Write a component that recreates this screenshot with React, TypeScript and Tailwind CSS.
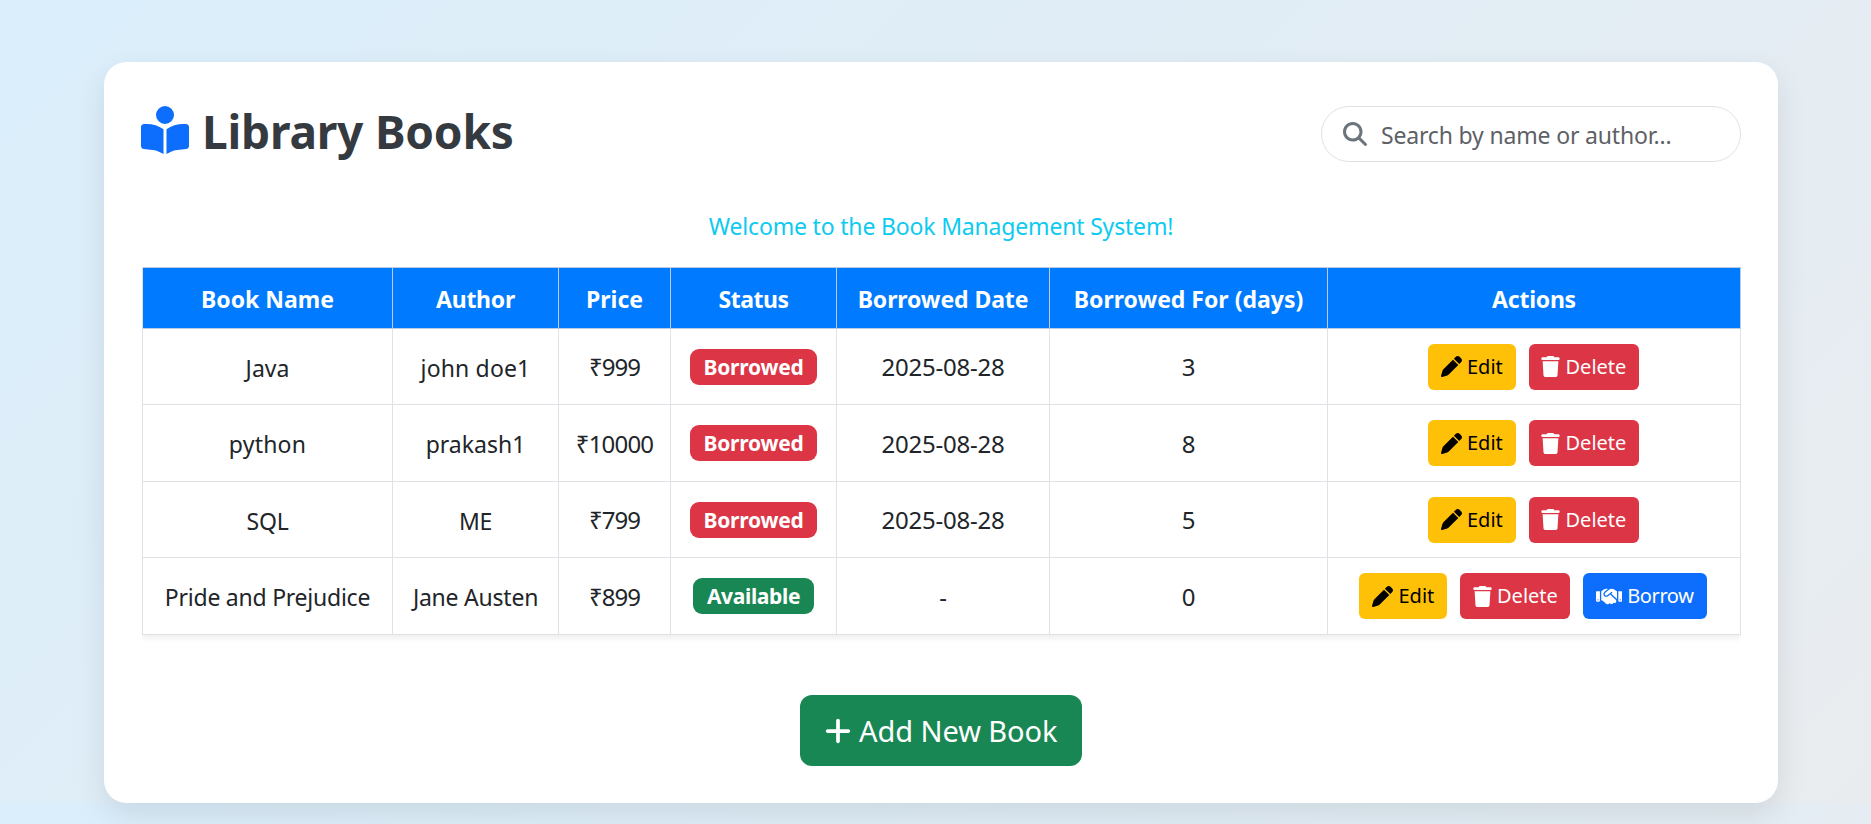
import type { ReactNode } from "react";
import {
  FaBookOpenReader,
  FaHandshake,
  FaMagnifyingGlass,
  FaPen,
  FaPlus,
  FaTrash,
} from "react-icons/fa6";

type Book = {
  name: string;
  nameClass: string;
  author: string;
  authorClass: string;
  price: string;
  priceClass: string;
  available: boolean;
  date: string;
  days: number;
  rowClass: string;
};

const columns = [
  { label: "Book Name", className: "w-[250px]" },
  { label: "Author", className: "w-[166px] tracking-[-0.28px]" },
  { label: "Price", className: "w-[112px]" },
  { label: "Status", className: "w-[166px] tracking-[-0.5px]" },
  { label: "Borrowed Date", className: "w-[213px] tracking-[-0.1px]" },
  { label: "Borrowed For (days)", className: "w-[278px]" },
  { label: "Actions", className: "w-[413px] tracking-[-0.25px]" },
];

const books: Book[] = [
  { name: "Java", nameClass: "", author: "john doe1", authorClass: "tracking-[0.15px]", price: "₹999", priceClass: "tracking-[-0.97px]", available: false, date: "2025-08-28", days: 3, rowClass: "h-[76px]" },
  { name: "python", nameClass: "tracking-[0.2px]", author: "prakash1", authorClass: "", price: "₹10000", priceClass: "tracking-[-0.84px]", available: false, date: "2025-08-28", days: 8, rowClass: "h-[77px]" },
  { name: "SQL", nameClass: "tracking-[-0.2px]", author: "ME", authorClass: "tracking-[-0.2px]", price: "₹799", priceClass: "tracking-[-0.97px]", available: false, date: "2025-08-28", days: 5, rowClass: "h-[76px]" },
  { name: "Pride and Prejudice", nameClass: "tracking-[-0.24px]", author: "Jane Austen", authorClass: "tracking-[-0.23px]", price: "₹899", priceClass: "tracking-[-0.97px]", available: true, date: "-", days: 0, rowClass: "h-[77px]" },
];

function Cell({ className = "", children }: { className?: string; children: ReactNode }) {
  return (
    <td className={`border-r border-b border-[#dee2e6] p-0 text-center align-middle ${className}`}>
      {children}
    </td>
  );
}

function StatusBadge({ available }: { available: boolean }) {
  return (
    <span
      className={`mx-auto flex h-9 items-center justify-center rounded-[9px] text-[21px] font-bold text-white ${
        available ? "w-[121px] bg-[#198754] tracking-[-0.34px]" : "w-[127px] bg-[#dc3545] tracking-[-0.24px]"
      }`}
    >
      {available ? "Available" : "Borrowed"}
    </span>
  );
}

function ActionButton({ className, children }: { className: string; children: ReactNode }) {
  return (
    <button
      type="button"
      className={`flex h-[46px] shrink-0 items-center rounded-md pl-[13px] text-[20px] ${className}`}
    >
      {children}
    </button>
  );
}

export default function App() {
  return (
    <div className="h-[824px] overflow-hidden bg-[linear-gradient(135deg,#daeefb,#e9ecef)] bg-[length:100%_803px] bg-repeat-y pt-[62px] font-['Noto_Sans',sans-serif] text-[23px] leading-9 text-[#212529]">
      <main className="ml-[104px] h-[741px] w-[1674px] rounded-[22.5px] bg-white px-[38px] pt-11 shadow-[0_12px_30px_rgba(0,0,0,0.09)]">
        <header className="flex h-14 items-start justify-between">
          <h1 className="flex h-12 items-center text-[46px] leading-none font-bold tracking-[-0.2px] whitespace-nowrap text-[#343a40]">
            <FaBookOpenReader className="-ml-px mr-[13px] size-12 text-[#0d6efd]" />
            <span className="pt-px">Library Books</span>
          </h1>
          <label className="-mr-px flex h-14 w-[420px] items-center rounded-full border border-[#dee2e6] pl-[21px]">
            <FaMagnifyingGlass className="mr-[14px] size-6 text-[#6c757d]" />
            <input
              type="text"
              placeholder="Search by name or author..."
              className="mt-0.5 h-9 w-[340px] bg-transparent tracking-[-0.17px] outline-none placeholder:text-[#5d6166]"
            />
          </label>
        </header>

        <p className="mt-[46px] text-center tracking-[-0.18px] text-[#0dcaf0]">
          Welcome to the Book Management System!
        </p>

        <div className="mt-[23px] h-[392px] w-[1599px] overflow-hidden">
          <table className="w-[1599px] table-fixed border-separate border-spacing-0 border-l border-[#dee2e6] shadow-[0_3px_6px_rgba(0,0,0,0.075)]">
            <thead>
              <tr className="h-[62px]">
                {columns.map((c) => (
                  <th
                    key={c.label}
                    className={`border-t border-r border-b border-[#b9cce4] bg-[#007bff] px-0 pt-0.5 pb-0 text-center align-middle font-bold text-white ${c.className}`}
                  >
                    {c.label}
                  </th>
                ))}
              </tr>
            </thead>
            <tbody>
              {books.map((b) => (
                <tr key={b.name} className={b.rowClass}>
                  <Cell className={`pt-0.5 ${b.nameClass}`}>{b.name}</Cell>
                  <Cell className={`pt-0.5 ${b.authorClass}`}>{b.author}</Cell>
                  <Cell className={`pt-px text-2xl leading-9 ${b.priceClass}`}>{b.price}</Cell>
                  <Cell>
                    <StatusBadge available={b.available} />
                  </Cell>
                  <Cell className="pt-px text-2xl leading-9 tracking-[-0.23px]">{b.date}</Cell>
                  <Cell className="pt-px text-2xl leading-9">{b.days}</Cell>
                  <Cell>
                    <div className="flex items-center justify-center gap-[13px] pr-[2px]">
                      <ActionButton className="w-[88px] bg-[#ffc107] text-black">
                        <FaPen className="mr-[5.5px] size-[21px]" />
                        Edit
                      </ActionButton>
                      <ActionButton className="w-[110px] bg-[#dc3545] text-white">
                        <FaTrash className="-ml-[1.5px] mr-[4.5px] size-[21px]" />
                        Delete
                      </ActionButton>
                      {b.available && (
                        <ActionButton className="w-[124px] bg-[#0d6efd] tracking-[-0.4px] text-white">
                          <FaHandshake className="mr-[5px] h-[21px] w-[26.25px]" />
                          Borrow
                        </ActionButton>
                      )}
                    </div>
                  </Cell>
                </tr>
              ))}
            </tbody>
          </table>
        </div>

        <button
          type="button"
          className="mx-auto mt-9 flex h-[71px] w-[282px] items-center rounded-xl bg-[#198754] pl-[23px] text-[29px] tracking-[-0.07px] whitespace-nowrap text-white"
        >
          <FaPlus className="mr-[6px] size-[30px]" />
          <span className="pt-px">Add New Book</span>
        </button>
      </main>
    </div>
  );
}
